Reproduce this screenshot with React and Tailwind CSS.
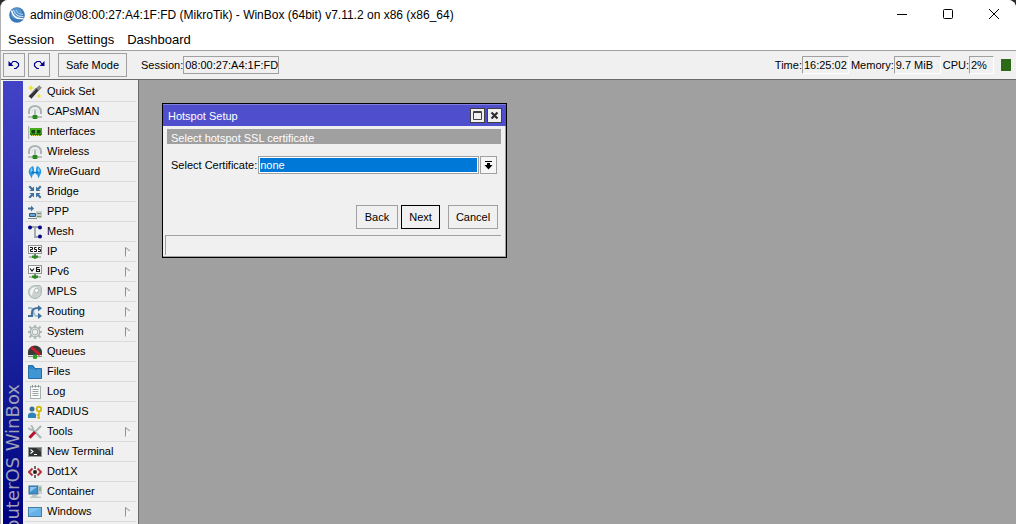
import React from "react";

const ICONS = {
    wand: (
        <>
            <path d="M2 12.5 L9.5 4" stroke="#333" strokeWidth="3.8" />
            <path d="M9.5 4.5 L12.5 1.5" stroke="#888" strokeWidth="3.8" />
            <path d="M2.5 9.5 L8 4" stroke="#888" strokeWidth="1" />
            <path d="M3 0 L4 2 L6 3 L4 4 L3 6 L2 4 L0 3 L2 2Z M11 8.5 L11.8 10.2 L13.5 11 L11.8 11.8 L11 13.5 L10.2 11.8 L8.5 11 L10.2 10.2Z" fill="#ece32a" />
        </>
    ),
    antenna: (
        <>
            <path d="M1 9 V6.5 A6 5.5 0 0 1 13 6.5 V9" fill="none" stroke="#a9b5b5" strokeWidth="2" />
            <path d="M3.8 8 V7 A3.2 3 0 0 1 10.2 7 V8" fill="none" stroke="#d9dfdf" strokeWidth="1" />
            <path d="M7 5 V11" stroke="#9aa8a8" strokeWidth="1.5" />
            <path d="M0 12 H14" stroke="#87918d" strokeWidth="1.2" />
            <rect x="4.5" y="10" width="5" height="4" rx="1" fill="#278b1b" />
        </>
    ),
    card: (
        <>
            <path d="M.7 1 V14" stroke="#a7b3b3" strokeWidth="1.2" />
            <path d="M2 3 H14 V10 H13 V11 H3 V10 H2Z" fill="#48ad20" />
            <path d="M3.5 5 H7 V8.5 H3.5Z M9 5 H12.5 V8.5 H9Z" fill="#15450e" />
            <path d="M2 9.5 H14" stroke="#237414" />
            <path d="M4 10.5 H12" stroke="#e6d85d" strokeDasharray="1 1" />
        </>
    ),
    guard: (
        <>
            <path d="M5 1 C0 3 0 8 2 10 L3.5 13.5 L5 9 L6 10 V4Z" fill="#2595e4" />
            <path d="M9 1 C14 3 14 8 12 10 L10.5 13.5 L9 9 L8 10 V4Z" fill="#2595e4" />
            <path d="M4 2.5 C2 4 2 6 2.5 7 L4.5 6Z M10 2.5 C12 4 12 6 11.5 7 L9.5 6Z" fill="#76d3f6" />
            <path d="M4 7.5 H10" stroke="#0875c0" strokeWidth="1.6" />
        </>
    ),
    bridge: (
        <>
            <path d="M6 6 V1.5 L4.5 3 L2 .5 L.5 2 L3 4.5 L1.5 6Z" fill="#41719d" />
            <path d="M8 6 V1.5 L9.5 3 L12 .5 L13.5 2 L11 4.5 L12.5 6Z" fill="#41719d" />
            <path d="M6 8 V12.5 L4.5 11 L2 13.5 L.5 12 L3 9.5 L1.5 8Z" fill="#41719d" />
            <path d="M8 8 V12.5 L9.5 11 L12 13.5 L13.5 12 L11 9.5 L12.5 8Z" fill="#41719d" />
        </>
    ),
    ppp: (
        <>
            <path d="M0 2.5 H3 V.5 L6 3.5 L3 6.5 V4.5 H0Z" fill="#41719d" />
            <path d="M8 6 H14 V13 H8Z" fill="#c8cece" />
            <path d="M9 8.5 H13 M9 11.5 H13" stroke="#6b9962" />
            <path d="M1.5 8.5 H7.5 V11.5 H1.5Z" fill="#66a8da" stroke="#315d80" />
            <path d="M0 13.5 H9" stroke="#7d898b" />
        </>
    ),
    mesh: (
        <>
            <path d="M2 2 H12 M7 2 V12 H12" fill="none" stroke="#9ba7a7" strokeWidth="1.8" />
            <circle cx="2" cy="2.5" r="2" fill="#07068e" />
            <circle cx="12" cy="2.5" r="2" fill="#07068e" />
            <circle cx="12" cy="11.5" r="2" fill="#07068e" />
        </>
    ),
    ip: (
        <>
            <rect x=".5" y=".5" width="13" height="8" fill="#f8f8f8" stroke="#8e9696" />
            <path d="M2 2.5 H4.5 V4.5 H2.5 V6.5 H5 M8.5 2.5 H6.5 V4.5 H8.5 V6.5 H6 M12.5 2.5 H10.5 V4.5 H12.5 V6.5 H10" fill="none" stroke="#111" />
            <path d="M7 9 V11" stroke="#777" strokeWidth="2" />
            <path d="M1 12 H13" stroke="#7e8782" />
            <path d="M4 10.5 H10 V12.5 L7 14 L4 12.5Z" fill="#278b1b" />
        </>
    ),
    ipv6: (
        <>
            <rect x=".5" y=".5" width="13" height="8" fill="#f8f8f8" stroke="#8e9696" />
            <path d="M2 3.5 L4 6 L6 3.5 M11.5 2.5 H8.5 V6.5 H11.5 V4.5 H8.5" fill="none" stroke="#111" strokeWidth="1.1" />
            <path d="M7 9 V11" stroke="#777" strokeWidth="2" />
            <path d="M1 12 H13" stroke="#7e8782" />
            <path d="M4 10.5 H10 V12.5 L7 14 L4 12.5Z" fill="#278b1b" />
        </>
    ),
    mpls: (
        <>
            <path d="M7 .7 H11 C13 .7 13.4 2 13.3 4 V7 C13.3 11 10.5 13.3 7 13.3 C3 13.3 .7 10.5 .7 7 C.7 3 3.5 .7 7 .7Z" fill="#cbd3d1" stroke="#a4afad" />
            <path d="M2 8 C2 4 5 2 9 2 C6 4 4 7 4 11Z" fill="#f5f7f7" />
            <circle cx="8.5" cy="5.5" r="2.2" fill="#f7f8f8" stroke="#a4afad" strokeWidth=".8" />
        </>
    ),
    routing: (
        <>
            <path d="M0 3 H2.5 C7 3 4 11 9 11 H11" fill="none" stroke="#a7bdcc" strokeWidth="2" />
            <path d="M0 11 H4 V8 C4 4 6 3 10 3" fill="none" stroke="#41719d" strokeWidth="2.2" />
            <path d="M10 0 L14 3.2 L10 6.4Z M10 7.8 L14 11 L10 14Z" fill="#41719d" />
        </>
    ),
    gear: (
        <>
            <path d="M1.5 1.5 L12.5 12.5 M12.5 1.5 L1.5 12.5 M7 0 V14 M0 7 H14" stroke="#afbbb9" strokeWidth="2.2" />
            <circle cx="7" cy="7" r="4.8" fill="#dce2e0" stroke="#a6b2b0" strokeWidth="1.2" />
            <circle cx="7" cy="7" r="2.8" fill="#efefef" stroke="#a6b2b0" />
        </>
    ),
    queues: (
        <>
            <path d="M0 10 V7 A7 6.5 0 0 1 14 7 V10Z" fill="#393b3b" />
            <path d="M3 2 L12 10" stroke="#cc1c2c" strokeWidth="3" />
            <path d="M0 11.5 H14" stroke="#89938f" strokeWidth="1.2" />
            <rect x="5" y="9.5" width="4" height="4.5" rx="1" fill="#31a01e" />
        </>
    ),
    files: (
        <>
            <path d="M.5 .5 H5 L7 3.5 H13.5 V13.5 H.5Z" fill="#2d83c3" stroke="#286da3" />
            <path d="M1 13 V4 H5 L8 6 L9.5 4 H13 V13Z" fill="#4096d4" />
        </>
    ),
    log: (
        <>
            <rect x="2.5" y="1.5" width="10" height="12" fill="#f8f9f9" stroke="#a5b1af" />
            <path d="M4.5 4.5 H10.5 M4.5 6.5 H10.5 M4.5 8.5 H10.5 M4.5 10.5 H10.5" stroke="#9ba7a5" />
            <path d="M4.5 0 V2.5 M7.5 0 V2.5 M10.5 0 V2.5" stroke="#899592" />
        </>
    ),
    radius: (
        <>
            <circle cx="4" cy="4" r="2.5" fill="#3c7098" />
            <path d="M0 13 V10 C0 6.5 8 6.5 8 10 V13Z" fill="#2f83bd" />
            <circle cx="11" cy="4" r="2.3" fill="none" stroke="#cfbd10" strokeWidth="2" />
            <path d="M11 6 V14 M11 10 H8.5 M11 12.5 H9" stroke="#cfbd10" strokeWidth="1.6" />
        </>
    ),
    tools: (
        <>
            <path d="M4 4 L13 13" stroke="#aab5b4" strokeWidth="2.3" />
            <path d="M0 3 L3 5 L5 3 L3 0" fill="none" stroke="#aab5b4" strokeWidth="1.6" />
            <path d="M13 1 L6 8" stroke="#aab5b4" strokeWidth="2" />
            <path d="M7 7 L1.5 12.8" stroke="#b1122d" strokeWidth="3" />
        </>
    ),
    terminal: (
        <>
            <rect x=".5" y="2.5" width="13" height="9" fill="#303232" stroke="#8e9797" />
            <path d="M2.5 4.5 L5 6.5 L2.5 8.5 M6 9.5 H9" fill="none" stroke="#fff" strokeWidth="1.1" />
            <path d="M8 3 H13 V7Z" fill="#5c5e5e" />
        </>
    ),
    dot1x: (
        <>
            <path d="M4.5 3.5 L1 7 L4.5 10.5 M9.5 3.5 L13 7 L9.5 10.5" fill="none" stroke="#b8353f" strokeWidth="2" />
            <circle cx="7" cy="7" r="2" fill="#222" />
            <path d="M7 1 V4 M7 10 V13" stroke="#4b4b4b" strokeWidth="1.6" />
        </>
    ),
    container: (
        <>
            <rect x="1" y="1" width="9" height="8" fill="#3d91d1" stroke="#396b92" />
            <path d="M2 2 H9 L2 7Z" fill="#8bc5ed" />
            <path d="M10.5 .5 H14 V9 H10.5Z" fill="#c5cecd" />
            <path d="M11 3 H13 M11 5 H13" stroke="#4f9f48" />
            <path d="M4 10 H9 V11.5 H13 V13 H2 V11.5 H4Z" fill="#bdc7c8" />
        </>
    ),
    windows: (
        <>
            <rect x=".5" y="2.5" width="13" height="9" fill="#65b1e7" stroke="#467ba2" />
            <path d="M1 3 H13 L1 9Z" fill="#7bc0ef" />
        </>
    ),
};

const MENU = [
    { label: "Quick Set", icon: "wand" },
    { label: "CAPsMAN", icon: "antenna" },
    { label: "Interfaces", icon: "card" },
    { label: "Wireless", icon: "antenna" },
    { label: "WireGuard", icon: "guard" },
    { label: "Bridge", icon: "bridge" },
    { label: "PPP", icon: "ppp" },
    { label: "Mesh", icon: "mesh" },
    { label: "IP", icon: "ip", sub: true },
    { label: "IPv6", icon: "ipv6", sub: true },
    { label: "MPLS", icon: "mpls", sub: true },
    { label: "Routing", icon: "routing", sub: true },
    { label: "System", icon: "gear", sub: true },
    { label: "Queues", icon: "queues" },
    { label: "Files", icon: "files" },
    { label: "Log", icon: "log" },
    { label: "RADIUS", icon: "radius" },
    { label: "Tools", icon: "tools", sub: true },
    { label: "New Terminal", icon: "terminal" },
    { label: "Dot1X", icon: "dot1x" },
    { label: "Container", icon: "container" },
    { label: "Windows", icon: "windows", sub: true },
];

const TitleBar = () => (
    <header className="flex h-[30px] shrink-0 items-center bg-white pl-2 pr-4">
        <svg width="16" height="16" viewBox="0 0 16 16" className="shrink-0">
            <circle cx="8" cy="8" r="7.8" fill="#3a78b8" />
            <circle cx="7.5" cy="6.5" r="5.8" fill="#5795ce" />
            <path d="M2.5 3.5 C4 9.5 8 12.5 14.5 11.5" fill="none" stroke="#fff" strokeWidth="1.3" />
            <path d="M4.5 3 C6 7.5 9 10 14.5 9.5" fill="none" stroke="#d5e7f5" strokeWidth="1" />
            <path d="M7 3 C8.5 6 10.5 7.5 14 7.5" fill="none" stroke="#a9cbe8" strokeWidth="1" />
        </svg>
        <h1 className="ml-[5px] text-[12px]">admin@08:00:27:A4:1F:FD (MikroTik) - WinBox (64bit) v7.11.2 on x86 (x86_64)</h1>
        <div className="ml-auto flex gap-[34px]">
            <button aria-label="Minimize">
                <svg width="12" height="12" viewBox="0 0 12 12"><path d="M1 5.5 H11" stroke="#000" /></svg>
            </button>
            <button aria-label="Maximize">
                <svg width="12" height="12" viewBox="0 0 12 12"><rect x="1.5" y=".5" width="9" height="9" rx="1" fill="none" stroke="#000" /></svg>
            </button>
            <button aria-label="Close">
                <svg width="12" height="12" viewBox="0 0 12 12"><path d="M1 0 L11 10 M11 0 L1 10" stroke="#000" /></svg>
            </button>
        </div>
    </header>
);

const ToolButton = ({ label, children, className }) => (
    <button aria-label={label} className={`flex h-6 items-center justify-center border border-[#a0a0a0] bg-[#f0f0f0] ${className}`}>
        {children}
    </button>
);

const Stat = ({ label, value, className }) => (
    <div className="flex items-center">
        <span>{label}</span>
        <output className={`h-[18px] border border-b-white border-l-[#a0a0a0] border-r-white border-t-[#a0a0a0] pl-px leading-4 ${className}`}>
            {value}
        </output>
    </div>
);

const Toolbar = () => (
    <div className="flex h-[30px] shrink-0 items-center border-b border-t border-b-[#696969] border-t-[#a0a0a0] bg-[#f0f0f0] pl-0.5 pr-[5px]">
        <ToolButton label="Undo" className="w-[22px]">
            <svg width="12" height="10" viewBox="0 0 12 10">
                <path d="M.5 1 V6 H5.5Z" fill="#000090" />
                <path d="M3 4 L5 1.5 H8 L10.5 3.5 V6 L8 8.5 H6" fill="none" stroke="#000090" strokeWidth="1.2" />
            </svg>
        </ToolButton>
        <ToolButton label="Redo" className="ml-[3px] w-[22px]">
            <svg width="12" height="10" viewBox="0 0 12 10">
                <path d="M11.5 1 V6 H6.5Z" fill="#000090" />
                <path d="M9 4 L7 1.5 H4 L1.5 3.5 V6 L4 8.5 H6" fill="none" stroke="#000090" strokeWidth="1.2" />
            </svg>
        </ToolButton>
        <ToolButton label="Safe Mode" className="ml-2 w-[69px]">Safe Mode</ToolButton>
        <label htmlFor="session" className="ml-[14px]">Session:</label>
        <input id="session" readOnly value="08:00:27:A4:1F:FD" className="h-[18px] w-24 border border-[#a0a0a0] bg-transparent pl-px" />
        <div className="ml-auto flex items-center gap-0.5">
            <Stat label="Time:" value="16:25:02" className="w-[47px]" />
            <Stat label="Memory:" value="9.7 MiB" className="w-[47px]" />
            <Stat label="CPU:" value="2%" className="w-[25px]" />
            <div className="ml-[5px] h-3 w-[10px] bg-[#2c6a18]" />
        </div>
    </div>
);

const Sidebar = () => (
    <aside className="flex w-[138px] shrink-0 border-l-2 border-r border-l-[#f8f8f8] border-r-[#696969] bg-[#f0f0f0] pr-0.5 pt-px">
        <div className="flex w-5 shrink-0 items-end justify-center overflow-hidden bg-gradient-to-b from-[#4242c6] to-[#000080]">
            <span className="-mb-[18px] rotate-180 whitespace-nowrap font-['DejaVu_Sans',sans-serif] text-[18px] leading-5 text-[#a0a0b8] [writing-mode:vertical-rl]">
                RouterOS WinBox
            </span>
        </div>
        <ul className="ml-0.5 flex-1 pt-px">
            {MENU.map((item) => (
                <li key={item.label}>
                    <button className="flex h-5 w-full items-center border-b border-[#dadada] pl-[3px] pr-1 text-left">
                        <svg width="14" height="14" viewBox="0 0 14 14" className="shrink-0">{ICONS[item.icon]}</svg>
                        <span className="ml-[5px]">{item.label}</span>
                        {item.sub && (
                            <svg width="8" height="10" viewBox="0 0 8 10" className="ml-auto">
                                <path d="M1.5 9.5 L6.5 4.5" stroke="#fff" />
                                <path d="M1.5 9.5 V.5 L6 4" fill="none" stroke="#909090" />
                            </svg>
                        )}
                    </button>
                </li>
            ))}
        </ul>
    </aside>
);

const HotspotDialog = () => (
    <section role="dialog" aria-label="Hotspot Setup" className="absolute left-[23px] top-[23px] w-[345px] border border-black bg-[#f0f0f0]">
        <div className="border-b border-r border-[#a0a0a0] pb-px">
            <div className="-mr-px flex h-[22px] items-center border-t border-[#8080d8] bg-[#4f4fcd] pl-[5px] pr-1 text-white">
                <h2 className="pt-0.5">Hotspot Setup</h2>
                <div className="ml-auto flex gap-0.5">
                    <button aria-label="Maximize window" className="border border-[#404040] bg-[#f0f0f0]">
                        <svg width="13" height="13" viewBox="0 0 13 13"><path d="M2.5 2.5 H10.5 V10.5 H2.5Z M2 3.5 H11" fill="none" stroke="#404040" /></svg>
                    </button>
                    <button aria-label="Close window" className="border border-[#404040] bg-[#f0f0f0]">
                        <svg width="13" height="13" viewBox="0 0 13 13"><path d="M3.5 3.5 L9.5 9.5 M9.5 3.5 L3.5 9.5" stroke="#303030" strokeWidth="2.2" /></svg>
                    </button>
                </div>
            </div>
            <p className="mx-1 mt-[3px] h-[15px] bg-[#a0a0a0] px-1 leading-[18px] text-white">Select hotspot SSL certificate</p>
            <form onSubmit={(e) => e.preventDefault()}>
                <div className="mt-3 flex items-center pl-2 pr-2">
                    <label htmlFor="certificate">Select Certificate:</label>
                    <div className="ml-px flex-1 border border-[#a0a0a0] bg-white p-px">
                        <select id="certificate" className="block h-[14px] w-full appearance-none bg-[#0078d7] leading-[14px] text-white">
                            <option>none</option>
                        </select>
                    </div>
                    <button type="button" aria-label="Show certificates" className="ml-px flex h-[18px] w-[17px] items-center justify-center border border-[#a0a0a0] bg-[#f6f6f6]">
                        <svg width="9" height="9" viewBox="0 0 9 9"><path d="M1 .5 H8" stroke="#000" /><path d="M3 2 H6 V4 H8.5 L4.5 8.5 L.5 4 H3Z" /></svg>
                    </button>
                </div>
                <div className="mt-[31px] flex justify-end pr-[7px]">
                    <button type="button" className="h-6 w-[42px] border border-[#a0a0a0]">Back</button>
                    <button className="ml-[3px] h-6 w-[39px] border border-black">Next</button>
                    <button type="button" className="ml-2 h-6 w-[50px] border border-[#a0a0a0]">Cancel</button>
                </div>
            </form>
            <div className="ml-0.5 mr-1 mt-1.5 h-5 border-l border-t border-[#a0a0a0]" />
        </div>
    </section>
);

export default function App() {
    return (
        <div className="h-screen bg-[#2b2b2b] font-['Liberation_Sans',Arial,sans-serif] text-[11px] text-black">
            <div className="flex h-full flex-col overflow-hidden rounded-t-lg border-l border-[#b0b0b0] bg-white">
                <TitleBar />
                <nav className="flex h-5 shrink-0 items-center gap-[13px] pl-[7px] text-[13px]">
                    <button>Session</button>
                    <button>Settings</button>
                    <button>Dashboard</button>
                </nav>
                <Toolbar />
                <div className="flex min-h-0 flex-1">
                    <Sidebar />
                    <main className="relative flex-1 bg-[#a0a0a0]">
                        <HotspotDialog />
                    </main>
                </div>
            </div>
        </div>
    );
}
